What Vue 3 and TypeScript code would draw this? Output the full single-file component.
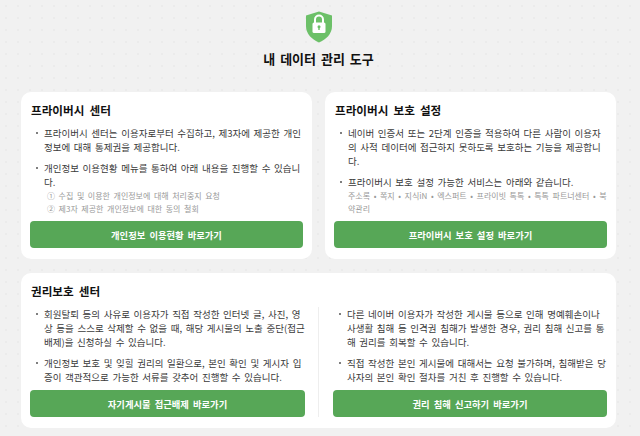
<script setup lang="ts">
interface Column {
  items: string[]
  button: string
}

const centerItems = [
  '프라이버시 센터는 이용자로부터 수집하고, 제3자에 제공한 개인정보에 대해 통제권을 제공합니다.',
  '개인정보 이용현황 메뉴를 통하여 아래 내용을 진행할 수 있습니다.',
]
const centerSub = ['① 수집 및 이용한 개인정보에 대해 처리중지 요청', '② 제3자 제공한 개인정보에 대한 동의 철회']

const settingItems = [
  '네이버 인증서 또는 2단계 인증을 적용하여 다른 사람이 이용자의 사적 데이터에 접근하지 못하도록 보호하는 기능을 제공합니다.',
  '프라이버시 보호 설정 가능한 서비스는 아래와 같습니다.',
]

const rightsColumns: Column[] = [
  {
    items: [
      '회원탈퇴 등의 사유로 이용자가 직접 작성한 인터넷 글, 사진, 영상 등을 스스로 삭제할 수 없을 때, 해당 게시물의 노출 중단(접근 배제)을 신청하실 수 있습니다.',
      '개인정보 보호 및 잊힐 권리의 일환으로, 본인 확인 및 게시자 입증이 객관적으로 가능한 서류를 갖추어 진행할 수 있습니다.',
    ],
    button: '자기게시물 접근배제 바로가기',
  },
  {
    items: [
      '다른 네이버 이용자가 작성한 게시물 등으로 인해 명예훼손이나 사생활 침해 등 인격권 침해가 발생한 경우, 권리 침해 신고를 통해 권리를 회복할 수 있습니다.',
      '직접 작성한 본인 게시물에 대해서는 요청 불가하며, 침해받은 당사자의 본인 확인 절차를 거친 후 진행할 수 있습니다.',
    ],
    button: '권리 침해 신고하기 바로가기',
  },
]
</script>

<template>
  <div class="page">
    <header class="head">
      <svg class="shield" viewBox="0 0 28 32" width="28" height="32">
        <path d="M14 0.5 L27 4.5 V15 C27 23 21 28.5 14 31.5 C7 28.5 1 23 1 15 V4.5 Z" fill="#6cc068" />
        <path d="M10 12 V8.5 a4 4 0 0 1 8 0 V12" fill="none" stroke="#fff" stroke-width="2" />
        <rect x="7.5" y="11.5" width="13" height="10.5" rx="1.5" fill="#fff" />
        <circle cx="14" cy="15.8" r="1.5" fill="#6cc068" />
        <rect x="13.3" y="16" width="1.4" height="3" fill="#6cc068" />
      </svg>
      <h1 class="title">내 데이터 관리 도구</h1>
    </header>

    <div class="top">
      <section class="card">
        <h2 class="card-title">프라이버시 센터</h2>
        <ul class="list">
          <li v-for="item in centerItems" :key="item">{{ item }}</li>
        </ul>
        <div class="sub sub-indent">
          <p v-for="line in centerSub" :key="line">{{ line }}</p>
        </div>
        <a class="btn">개인정보 이용현황 바로가기</a>
      </section>

      <section class="card">
        <h2 class="card-title">프라이버시 보호 설정</h2>
        <ul class="list">
          <li v-for="item in settingItems" :key="item">{{ item }}</li>
        </ul>
        <div class="sub">
          <p>주소록 • 쪽지 • 지식iN • 엑스퍼트 • 프라이빗 톡톡 • 톡톡 파트너센터 • 북약관리</p>
        </div>
        <a class="btn">프라이버시 보호 설정 바로가기</a>
      </section>
    </div>

    <section class="card wide">
      <h2 class="card-title">권리보호 센터</h2>
      <div class="cols">
        <div v-for="col in rightsColumns" :key="col.button" class="col">
          <ul class="list">
            <li v-for="item in col.items" :key="item">{{ item }}</li>
          </ul>
          <a class="btn">{{ col.button }}</a>
        </div>
      </div>
    </section>
  </div>
</template>

<style scoped>
.page {
  width: 640px;
  height: 436px;
  box-sizing: border-box;
  padding: 11px 24px 0 21px;
  overflow: hidden;
  background-color: #f1f1f1;
  background-image: radial-gradient(circle, #ebebeb 1px, transparent 1px);
  background-size: 12px 12px;
  font-family: "Noto Sans CJK KR", "Noto Sans", sans-serif;
  color: #3a3a3a;
}

.head {
  display: flex;
  flex-direction: column;
  align-items: center;
  height: 81px;
}

.shield {
  display: block;
  margin-left: 1px;
}

.title {
  margin: 6px 0 0;
  font-size: 13px;
  line-height: 20px;
  font-weight: 700;
  word-spacing: 2px;
  color: #111;
}

.top {
  display: grid;
  grid-template-columns: 291px 291px;
  gap: 13px;
  margin-bottom: 14px;
}

.card {
  display: flex;
  flex-direction: column;
  box-sizing: border-box;
  height: 167px;
  padding: 10px 9px 11px;
  background: #fff;
  border-radius: 10px;
}

.wide {
  height: 155px;
}

.card-title {
  margin: 0 0 7px 1px;
  font-size: 11.6px;
  line-height: 17px;
  font-weight: 700;
  word-spacing: 2.5px;
  color: #111;
}

.list {
  margin: 0;
  padding: 0;
  list-style: none;
}

.list li {
  position: relative;
  margin-bottom: 7px;
  padding-left: 14px;
  font-size: 9.5px;
  line-height: 14px;
  word-spacing: 1.5px;
  word-break: break-all;
}

.list li::before {
  content: "";
  position: absolute;
  left: 6px;
  top: 6px;
  width: 2px;
  height: 2px;
  border-radius: 50%;
  background: #555;
}

.list li:last-child {
  margin-bottom: 0;
}

.sub {
  margin-left: 14px;
  font-size: 8px;
  line-height: 13px;
  word-spacing: 1.8px;
  color: #999;
  word-break: break-all;
}

.sub p {
  margin: 0;
}

.sub-indent {
  padding-left: 3px;
}

.btn {
  display: flex;
  align-items: center;
  justify-content: center;
  flex-shrink: 0;
  height: 27px;
  margin-top: auto;
  background: #57a757;
  border-radius: 4px;
  font-size: 9.3px;
  font-weight: 700;
  word-spacing: 2px;
  color: #fff;
}

.cols {
  display: grid;
  grid-template-columns: 275px 1fr;
  flex: 1;
}

.col {
  display: flex;
  flex-direction: column;
}

.col + .col {
  margin-left: 13px;
  padding-left: 14px;
  border-left: 1px solid #eee;
}
</style>

<style>
html,
body {
  margin: 0;
  background: #f1f1f1;
}
</style>
